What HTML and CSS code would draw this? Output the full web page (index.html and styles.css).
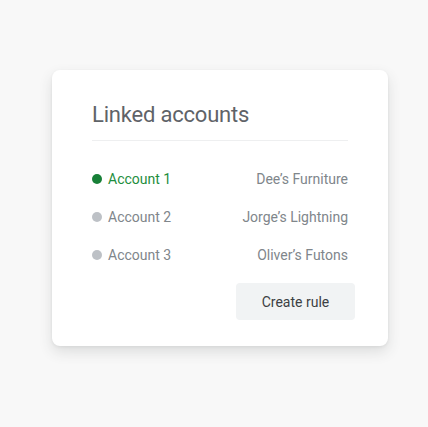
FILE: index.html
```html
<!DOCTYPE html>
<html>
<head>
<meta charset="utf-8">
<link rel="stylesheet" href="styles.css">
</head>
<body>
<div class="card">
  <h1 class="title">Linked accounts</h1>
  <div class="divider"></div>
  <ul class="list">
    <li class="row active"><span class="acct"><span class="dot"></span>Account 1</span><span class="name">Dee’s Furniture</span></li>
    <li class="row"><span class="acct"><span class="dot"></span>Account 2</span><span class="name">Jorge’s Lightning</span></li>
    <li class="row"><span class="acct"><span class="dot"></span>Account 3</span><span class="name">Oliver’s Futons</span></li>
  </ul>
  <div class="actions"><button class="btn">Create rule</button></div>
</div>
</body>
</html>
```
FILE: styles.css
```css
html, body { margin: 0; padding: 0; }
body {
  background: #f8f8f8;
  font-family: Roboto, "Open Sans", sans-serif;
  width: 428px;
  height: 427px;
}
.card {
  box-sizing: border-box;
  width: 336px;
  height: 276px;
  margin: 70px 0 0 52px;
  background: #fff;
  border-radius: 8px;
  box-shadow: 0 6px 14px rgba(60,64,67,0.14), 0 1px 3px rgba(60,64,67,0.08);
  padding: 33px 40px 0 40px;
}
.title {
  margin: 0;
  font-size: 22px;
  line-height: 24px;
  font-weight: 400;
  letter-spacing: -0.2px;
  color: #5f6368;
}
.divider {
  height: 1px;
  background: #eeeff0;
  margin-top: 13px;
}
.list {
  list-style: none;
  margin: 19px 0 0 0;
  padding: 0;
}
.row {
  height: 38px;
  display: flex;
  align-items: center;
  justify-content: space-between;
  font-size: 14px;
  color: #80868b;
}
.acct { display: flex; align-items: center; }
.dot {
  width: 10px;
  height: 10px;
  border-radius: 50%;
  background: #bdc1c6;
  margin-right: 6px;
}
.row.active .acct { color: #1e8e3e; }
.row.active .dot { background: #188038; }
.actions {
  display: flex;
  justify-content: flex-end;
  margin-top: 9px;
  margin-right: -7px;
}
.btn {
  width: 119px;
  height: 37px;
  border: none;
  border-radius: 4px;
  background: #f1f3f4;
  color: #3c4043;
  font-family: Roboto, sans-serif;
  font-size: 14px;
  font-weight: 400;
  padding: 0;
}
```
